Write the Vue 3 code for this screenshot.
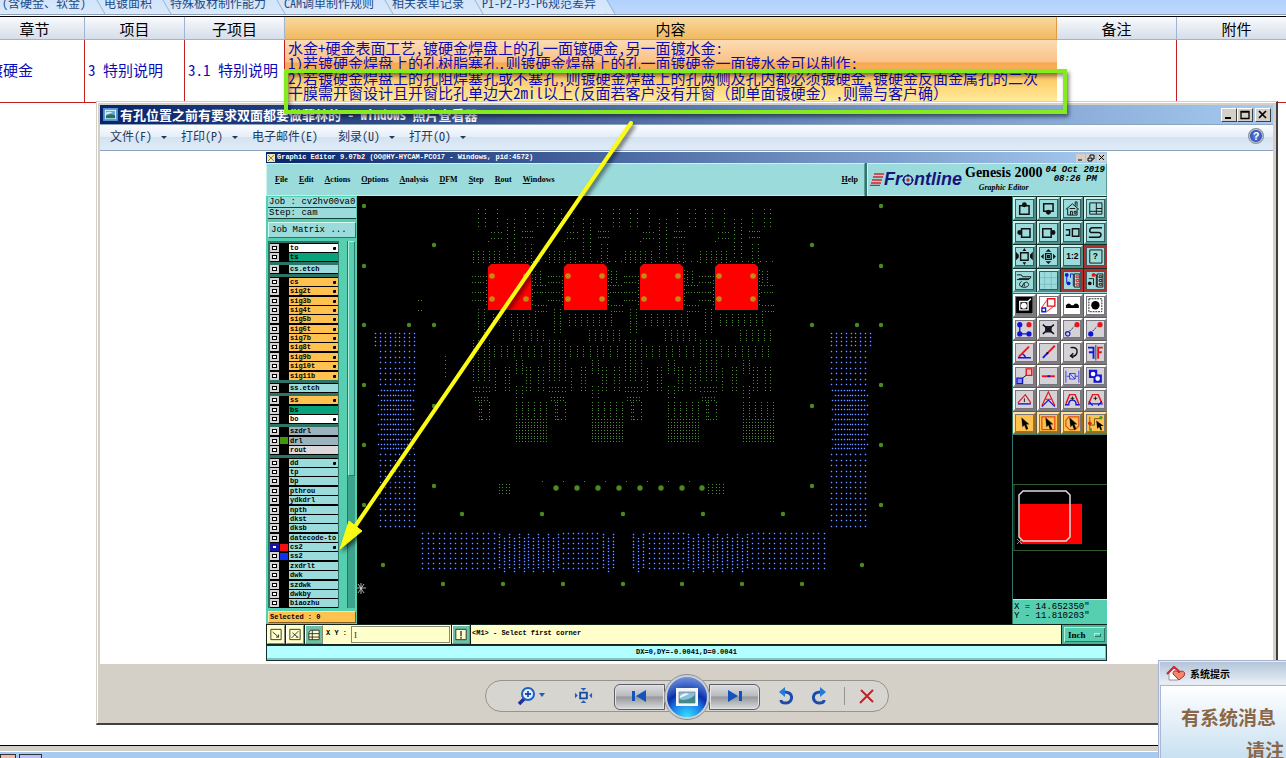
<script setup>
import { ref } from 'vue'

const sheetTabs = ['(含硬金、软金)', '电镀面积', '特殊板材制作能力', 'CAM调单制作规则', '相关表单记录', 'P1-P2-P3-P6规范差异']

const viewerMenu = [
    { text: '文件(F)', caret: true },
    { text: '打印(P)', caret: true },
    { text: '电子邮件(E)', caret: false },
    { text: '刻录(U)', caret: true },
    { text: '打开(O)', caret: true }
]

const editorMenu = ['File', 'Edit', 'Actions', 'Options', 'Analysis', 'DFM', 'Step', 'Rout', 'Windows']

const row = (name, tone = 'aqua', mark = false, swatch = '') => ({ name, tone, mark, swatch })

const layerGroups = [
    [row('to', 'white', true), row('ts', 'green')],
    [row('cs.etch')],
    ['cs', 'sig2t', 'sig3b', 'sig4t', 'sig5b', 'sig6t', 'sig7b', 'sig8t', 'sig9b', 'sig10t', 'sig11b'].map(n => row(n, 'orange', true)),
    [row('ss.etch')],
    [row('ss', 'orange', true), row('bs', 'green'), row('bo', 'white', true)],
    [row('szdrl', 'steel'), row('drl', 'steel', false, 'lime'), row('rout', 'pale')],
    [
        row('dd', 'aqua', true), row('tp'), row('bp'), row('pthrou'), row('ydkdrl'), row('npth'), row('dkst'), row('dksb'),
        row('datecode-to'), row('cs2', 'aqua', true, 'red'), row('ss2', 'aqua', false, 'blue'), row('zxdrlt'),
        row('dwk'), row('szdwk'), row('dwkby'), row('biaozhu')
    ]
]

const command = ref('')

// each shape: [path, stroke, fill, stroke width]
const K = '#111'
const R = '#e8141c'
const B = '#1414d8'
const N = 'none'
const dot = (x, y, r) => `M${x - r} ${y}a${r} ${r} 0 1 0 ${r * 2} 0a${r} ${r} 0 1 0 ${-r * 2} 0`
const cursor = 'M9 6l1 10 2-2 2 5 2-1-2-5h3z'

const viewTools = [
    { title: 'Pan up', s: [['M7 9h10v9H7z', K, N, 1.6], [dot(12, 8, 2.6), N, K]] },
    { title: 'Pan down', s: [['M7 7h10v8H7z', K, N, 1.6], [dot(12, 16, 2.6), N, K]] },
    { title: 'Home', s: [['M5 13l7-6 7 6M7 12v7h10v-7M10 19v-4h2v4M14 15h2v2h-2zM9 12h6M15 9V5h2v5', K, N, 1]] },
    { title: 'Split', s: [['M6 6h13v12H6zM13 6v12M6 15h13M13 12h6', K, N, 1]] },
    { title: 'Pan left', s: [['M9 8h9v9H9z', K, N, 1.6], [dot(7, 12, 2.6), N, K]] },
    { title: 'Pan right', s: [['M6 8h9v9H6z', K, N, 1.6], [dot(17, 12, 2.6), N, K]] },
    { title: 'Previous', s: [['M5 9h4v6H5M12 8h7v8h-7z', K, N, 1.5]] },
    { title: 'Serpentine', s: [['M19 7H9q-3 0-3 3 0 2 3 2h6q3 0 3 2 0 3-3 3H5', K, N, 1.5]] },
    { title: 'Zoom out', s: [['M8 8h8v8H8z', K, N, 1.5], ['M10 6l2-3 2 3zM10 18l2 3 2-3zM6 10l-3-3v9l3-3zM18 10l3-3v9l-3-3z', N, K]] },
    { title: 'Zoom in', s: [['M9 9h6v6H9zM11 11h2v2h-2z', K, N, 1.3], ['M9 7l3-3 3 3zM9 17l3 3 3-3zM7 9l-3 3 3 3zM17 9l3 3-3 3z', N, K]] },
    { title: 'Zoom one to two', t: '1:2', s: [] },
    { title: 'Info', t: '?', hot: true, s: [['M6 5h13v14H6z', K, N, 1]] },
    { title: 'Measure', s: [['M4 6h5l1 2h9l-1 2H6M4 11h13M9 13c-3 2-3 5 1 6 5 1 8-2 6-4-2-3-5 0-4 3M12 14l-3 5', K, N, 1]] },
    { title: 'Grid', s: [['M3 9h18M3 16h18M8 3v18M15 3v18', '#7fbcc4', N, 1]] },
    { title: 'Layers', hot: true, s: [['M6 6v9h4M10 9V5h3v13', B, N, 1], [dot(6, 6, 2) + dot(8, 15, 2), N, B], ['M14 5h6v14h-6z', K, '#bfd8d8', 1], ['M16 7h3v2h-3zM16 11h3v2h-3zM16 15h3v2h-3z', R, N, 1]] },
    { title: 'Nets', hot: true, s: [['M5 10h5v7M10 6h3v13', K, N, 1], [dot(6, 15, 2), N, K], [dot(10, 6, 2), N, R], ['M14 5h6v14h-6z', K, '#bfd8d8', 1], ['M16 7h3v2h-3zM16 11h3v2h-3zM16 15h3v2h-3z', K, N, 1]] }
]

const editTools = [
    { title: 'Negative pad', tone: 'white', s: [['M3 3h18v18H3z', N, '#000'], ['M7 8h9v9H7zM16 8l3-3', '#fff', N, 1.5], [dot(11.500, 12.500, 3.200), N, '#fff']] },
    { title: 'Resize', tone: 'white', s: [['M11 5h8v8h-8z', R, N, 1.5], ['M5 15h4v4H5z', B, N, 1.5], ['M5 14l6-8M10 19l8-6', R, N, 1]] },
    { title: 'Bumps', tone: 'white', s: [['M5 15v-3q3-4 6 0h2q3-4 6 0v3z', N, '#000']] },
    { title: 'Pad', tone: 'white', s: [['M5 5h14v14H5z', K, N, 1, '2 1'], [dot(12, 12, 4.500), N, '#000']] },
    { title: 'Copy', s: [['M7 7v10h10', B, N, 1.4], [dot(7, 7, 2.800) + dot(7, 17, 2.800) + dot(17, 17, 2.800), N, B], [dot(17, 7, 2.800), N, R]] },
    { title: 'Delete', s: [['M9 9h6v6H9z', K, '#26268a', 1], ['M6 7l12 10M18 7L6 17', K, N, 1.5]] },
    { title: 'Move', s: [[dot(7, 17, 2.400), B, N, 1.3], ['M9 14l5-5', K, N, 1, '2 1'], [dot(17, 7, 2.800), N, R]] },
    { title: 'Drag', s: [[dot(7, 17, 2.800), N, B], ['M9 14l5-5', K, N, 1, '2 1'], [dot(17, 7, 2.800), N, R]] },
    { title: 'Angle', s: [['M17 6L6 17', R, N, 2], ['M5 18h14M13 18q0-3-3-4', B, N, 1.5]] },
    { title: 'Line', s: [['M19 5l-8 8', R, N, 2], ['M11 13l-5 5', B, N, 2], [dot(11, 13, 1.200), N, K]] },
    { title: 'Rotate', s: [['M10 7q8-1 7 5-1 5-6 4M13 13l-3 3 3 2', K, N, 1.5]] },
    { title: 'Mirror', s: [['M4 7h6v12M5 12h5', B, N, 2], ['M20 7h-5v12M15 12h4', R, N, 2], ['M12.500 4v17', K, N, 0.800]] },
    { title: 'Change symbol', s: [['M14 4h6v7h-6z', R, '#f7b8b8', 1.5], ['M4 14h6v6H4z', B, '#8d94f0', 1.5], ['M10 14l4-3', K, N, 1]] },
    { title: 'Break', s: [['M5 12h14', R, N, 2], ['M11 12h3', B, N, 2]] },
    { title: 'Stretch', s: [['M5 6v13M19 6v13M9 9h6v6H9zM6 12h3M15 12h3M9 9l6 6', B, N, 0.800]] },
    { title: 'Merge', s: [['M5 5h9v9H5zM10 10h9v9h-9z', N, B], [dot(9.500, 9.500, 2.500) + dot(14.500, 14.500, 2.500), N, '#fff']] },
    { title: 'Triangle', s: [['M5 16L13 7l6 9', R, N, 1.300], ['M5 17h14', B, N, 1.500], ['M12 11v4', K, N, 1]] },
    { title: 'Peak', s: [['M5 19L12 4l7 15M9 12h6', R, N, 1.300], ['M5 20l7-7 7 7', B, N, 1.300]] },
    { title: 'Slope', s: [['M5 17L9 7h6l4 10', R, N, 1.600], ['M4 18h4q0-5 4-5t4 5h4', B, N, 1.500], ['M12 9v4M10 11h4', K, N, 1]] },
    { title: 'Cross slope', s: [['M5 16L9 7h6l4 9', R, N, 1.600], ['M4 17h16M5 14l4 5M19 14l-4 5', B, N, 1.300], ['M12 9v4M10 11h4', K, N, 1]] },
    { title: 'Select', tone: 'gold', s: [[cursor, K, '#000', 0.300]] },
    { title: 'Select in frame', tone: 'gold', s: [['M5 5h14v14H5z', '#e0491c', N, 1.300], [cursor, K, '#000', 0.300]] },
    { title: 'Select in polygon', tone: 'gold', s: [['M8 5h11v10l-4 4H9l-4-4V9z', '#e0491c', N, 1.300], [cursor, K, '#000', 0.300]] },
    { title: 'Select net', tone: 'gold', s: [['M6 5v14M6 14h5V7h8', '#6b571d', N, 1], [dot(6, 12, 2), N, '#d42a10'], [dot(18, 6, 1.800) + dot(7, 19, 1.500), N, '#3c9c1c'], ['M13 9l1 9 2-2 2 4 1-1-1-4h3z', N, '#000']] }
]

// a block of evenly spaced one pixel pads as one path
function pads(x0, x1, cols, y0, y1, rows) {
    let d = ''
    for (let i = 0; i < cols; i++) {
        for (let j = 0; j < rows; j++) {
            const x = x0 + (cols > 1 ? (x1 - x0) * i / (cols - 1) : 0)
            const y = y0 + (rows > 1 ? (y1 - y0) * j / (rows - 1) : 0)
            d += `M${Math.round(x)} ${Math.round(y)}h1v1h-1z`
        }
    }
    return d
}

function edgeConnector(x, dense, wideRight) {
    const w = 34
    let d = wideRight ? pads(x, x + 39, 9, 333, 345, 4) : pads(x - 5, x + w, 9, 333, 345, 4)
    d += pads(x, x + w, 8, 351, 384, 7)
    for (let i = 0; i < 13; i++) {
        const shift = i % 2 ? dense : 0
        const y = 390 + i * 4.87
        d += pads(x + 1 + shift, x + w - 1 + shift, 12, y, y, 1)
    }
    return d + pads(x, x + w, 8, 454, 526, 14)
}

function denseColumns(x, cols) {
    let d = ''
    for (let i = 0; i < cols; i++) {
        const y = i % 2 ? 538 : 534
        d += pads(x + i * 4.9, 0, 1, y, y + 33, 11)
    }
    return d
}

const bluePads = edgeConnector(380, -3, false) + edgeConnector(831, 3, true)
    + pads(422, 494, 14, 533, 568, 8) + denseColumns(499, 13) + pads(563, 597, 8, 533, 568, 8) + denseColumns(603, 3)
    + denseColumns(633, 3) + pads(649, 683, 8, 533, 568, 8) + denseColumns(688, 13) + pads(752, 824, 14, 533, 568, 8)

const drills = [
    [364, 206], [434, 245], [364, 266], [364, 325], [409, 325], [434, 325], [364, 385], [434, 406], [364, 445], [434, 486], [364, 505],
    [881, 206], [812, 245], [881, 266], [812, 325], [857, 325], [881, 325], [881, 385], [812, 406], [881, 445], [812, 486], [881, 505],
    [462, 514], [542, 514], [623, 514], [703, 514], [783, 514], [383, 565], [862, 565],
    [443, 584], [503, 584], [563, 584], [623, 584], [682, 584], [742, 584], [802, 584]
]

const bigDrills = [556, 577, 598, 619, 640, 661, 682, 702]
const chips = [488, 564, 640, 715]

// one board's via field: x from, x to, columns, y from, y to, rows
const viaField = [
    [478, 485, 2, 209, 226, 5], [497, 497, 1, 209, 226, 5], [525, 525, 1, 209, 226, 5], [537, 543, 2, 209, 226, 5],
    [507, 514, 2, 219, 257, 11], [491, 501, 4, 232, 238, 2], [522, 532, 5, 231, 237, 2], [488, 488, 1, 241, 241, 1],
    [473, 499, 6, 251, 262, 5], [525, 531, 2, 244, 262, 6], [503, 545, 8, 261, 261, 1],
    [472, 483, 5, 276, 282, 2], [472, 483, 5, 292, 300, 2], [486, 486, 1, 276, 304, 9], [532, 532, 1, 270, 304, 10],
    [535, 540, 2, 271, 282, 5], [534, 545, 5, 285, 292, 2], [535, 546, 5, 305, 311, 2],
    [478, 484, 2, 309, 332, 9], [493, 535, 8, 314, 325, 5], [513, 543, 6, 330, 340, 5],
    [473, 489, 4, 340, 380, 15], [494, 541, 8, 346, 356, 5], [516, 522, 2, 360, 373, 6],
    [495, 495, 1, 368, 390, 8], [505, 509, 2, 367, 390, 8], [526, 530, 2, 367, 390, 8], [538, 543, 2, 367, 390, 8],
    [473, 489, 6, 387, 391, 2], [475, 487, 5, 397, 400, 2], [516, 522, 2, 386, 397, 4],
    [479, 481, 2, 402, 419, 6], [489, 489, 1, 402, 419, 6], [479, 489, 4, 419, 419, 1],
    [516, 546, 6, 402, 416, 6], [516, 546, 11, 419, 441, 9]
]

let vias = ''
for (let i = 0; i < 4; i++) {
    for (const [x0, x1, c, y0, y1, r] of viaField) vias += pads(x0 + i * 75.800, x1 + i * 75.800, c, y0, y1, r)
}
vias += pads(542, 689, 8, 481, 481, 1) + pads(499, 509, 4, 484, 493, 4) + pads(708, 723, 5, 484, 493, 4)
    + pads(418, 421, 2, 300, 310, 2) + pads(445, 445, 1, 356, 376, 6)
</script>

<template>
    <div class="page">
        <nav class="sheet-tabs">
            <a v-for="tab in sheetTabs" :key="tab" href="#" class="sheet-tab">{{ tab }}</a>
        </nav>

        <table class="sheet">
            <thead>
                <tr>
                    <th class="col-std">章节</th>
                    <th class="col-std">项目</th>
                    <th class="col-std">子项目</th>
                    <th class="picked">内容</th>
                    <th class="col-note">备注</th>
                    <th class="col-note">附件</th>
                </tr>
            </thead>
            <tbody>
                <tr>
                    <td>镀硬金</td>
                    <td>3 特别说明</td>
                    <td>3.1 特别说明</td>
                    <td class="picked">
                        <div>水金+硬金表面工艺,镀硬金焊盘上的孔一面镀硬金,另一面镀水金:</div>
                        <div>1)若镀硬金焊盘上的孔树脂塞孔,则镀硬金焊盘上的孔一面镀硬金一面镀水金可以制作;</div>
                        <div>2)若镀硬金焊盘上的孔阻焊塞孔或不塞孔,则镀硬金焊盘上的孔两侧及孔内都必须镀硬金,镀硬金反面金属孔的二次</div>
                        <div>干膜需开窗设计且开窗比孔单边大2mil以上(反面若客户没有开窗<span class="wide">（即单面镀硬金）</span>,则需与客户确<span class="wide">）</span></div>
                    </td>
                    <td></td>
                    <td></td>
                </tr>
            </tbody>
        </table>

        <footer class="sheet-foot">
            <span class="chip pink"></span>
            <span class="chip lilac"></span>
        </footer>

        <section class="viewer">
            <header class="titlebar">
                <svg class="title-icon" viewBox="0 0 16 14">
                    <path d="M0 0h16v14H0z" fill="#4f94cf" />
                    <path d="M2 2h12v10H2z" fill="#eef6fb" />
                    <path d="M3 3h10v8H3z" fill="#64a8d6" />
                    <path d="M3 9q4-4 10-1v3H3z" fill="#2c6d58" />
                    <path d="M3 5q4-2 7 0l-7 2z" fill="#d9eefa" />
                </svg>
                <span class="title-text">有孔位置之前有要求双面都要做菲林的 - Windows 照片查看器</span>
                <button class="win-btn" aria-label="Minimize"><svg viewBox="0 0 12 10"><path d="M2 8h6" stroke="#000" stroke-width="2" /></svg></button>
                <button class="win-btn" aria-label="Maximize"><svg viewBox="0 0 12 10"><path d="M2 1.500h8v7H2zM2 2h8" fill="none" stroke="#000" stroke-width="1.300" /></svg></button>
                <button class="win-btn close" aria-label="Close"><svg viewBox="0 0 12 10"><path d="M2 1l7 7M9 1L2 8" stroke="#000" stroke-width="1.700" /></svg></button>
            </header>

            <div class="viewer-menu">
                <button v-for="m in viewerMenu" :key="m.text" :class="{ plain: !m.caret }">
                    {{ m.text }}<i v-if="m.caret" class="caret"></i>
                </button>
                <button class="help" aria-label="Help">?</button>
            </div>

            <div class="photo-area">
                <div class="editor">
                    <div class="ed-title">
                        <svg class="ed-logo" viewBox="0 0 8 8"><path d="M0 0h8v8H0z" fill="#eee9b8" /><path d="M1 1l6 6M7 1L1 7" stroke="#99852a" /></svg>
                        <span>Graphic Editor 9.07b2 (OO@HY-HYCAM-PCO17 - Windows, pid:4572)</span>
                        <svg class="ed-ctl" viewBox="0 0 30 8">
                            <path d="M0 0h9v8H0zM10 0h9v8h-9zM21 0h9v8h-9z" fill="#d4d0c8" />
                            <path d="M2 6h4M12 4h4v3h-4zM14 3V1h4v4h-2M23 1l5 5M28 1l-5 5" fill="none" stroke="#000" />
                        </svg>
                    </div>

                    <div class="ed-head">
                        <nav class="ed-menu">
                            <button v-for="m in editorMenu" :key="m">{{ m }}</button>
                            <button class="ed-help">Help</button>
                        </nav>
                        <div class="brand">
                            <div class="logo">
                                <svg class="stripes" viewBox="0 0 14 14"><path d="M4 2h10M3 5h10M2 8h10M1 11h10M0 13.500h10" stroke="#d8252c" stroke-width="1.500" /></svg>
                                <span>Fr</span>
                                <svg class="target" viewBox="0 0 12 12"><circle cx="6" cy="6" r="4.500" fill="none" stroke="#15157c" stroke-width="1.500" /><circle cx="6" cy="6" r="1.700" fill="#d8252c" /><path d="M6 0v3M6 9v3M0 6h3M9 6h3" stroke="#15157c" /></svg>
                                <span>ntline</span>
                            </div>
                            <div class="product">
                                <div class="product-name">Genesis 2000</div>
                                <div class="product-sub">Graphic Editor</div>
                            </div>
                            <div class="clock">
                                <div>04 Oct 2019</div>
                                <div>08:26 PM</div>
                            </div>
                        </div>
                    </div>

                    <div class="ed-body">
                        <aside class="left">
                            <div class="job">Job : cv2hv00va0</div>
                            <div class="job">Step: cam</div>
                            <button class="matrix">Job Matrix ...</button>
                            <div class="layer-box">
                                <div class="layers">
                                    <div v-for="(group, g) in layerGroups" :key="g" class="group" :style="{ flexGrow: group.length }">
                                        <label v-for="l in group" :key="l.name" class="layer">
                                            <input type="checkbox" :class="{ active: l.name === 'cs2' }">
                                            <span class="swatch" :class="l.swatch"></span>
                                            <span class="name" :class="l.tone">{{ l.name }}<i v-if="l.mark"></i></span>
                                        </label>
                                    </div>
                                </div>
                                <div class="scroll">
                                    <div class="thumb"></div>
                                </div>
                            </div>
                            <div class="selected">Selected : 0</div>
                        </aside>

                        <div class="canvas">
                            <svg viewBox="357 196 655 428">
                                <path :d="vias" fill="#4d8a35" />
                                <path :d="bluePads" fill="#6f9dff" stroke="#1c34b4" stroke-width="1" paint-order="stroke" />
                                <g v-for="x in chips" :key="x">
                                    <path :d="`M${x} 310v-43l3-3h37l3 3v43z`" fill="#fe0000" />
                                    <circle v-for="(p, i) in [[4, 276], [38, 276], [4, 299], [38, 299]]" :key="i" :cx="x + p[0]" :cy="p[1]" r="2.800" fill="#c48a10" />
                                </g>
                                <circle v-for="(p, i) in drills" :key="i" :cx="p[0]" :cy="p[1]" r="2.200" fill="#4c8a1e" />
                                <circle v-for="x in bigDrills" :key="x" :cx="x" cy="488" r="2.700" fill="#4c8a1e" />
                                <path d="M357 588h9M361 583v11M358 584l6 9M364 584l-6 9" stroke="#ddd" stroke-width="0.800" />
                            </svg>
                        </div>

                        <aside class="right">
                            <div class="tools view">
                                <button v-for="t in viewTools" :key="t.title" :aria-label="t.title" :class="{ hot: t.hot }">
                                    <svg viewBox="2 2 20 20">
                                        <path v-for="(s, i) in t.s" :key="i" :d="s[0]" :stroke="s[1]" :fill="s[2]" :stroke-width="s[3]" />
                                        <text v-if="t.t" x="12" y="15" text-anchor="middle">{{ t.t }}</text>
                                    </svg>
                                </button>
                            </div>
                            <div class="tools edit">
                                <button v-for="t in editTools" :key="t.title" :aria-label="t.title" :class="t.tone">
                                    <svg viewBox="2 2 20 20">
                                        <path v-for="(s, i) in t.s" :key="i" :d="s[0]" :stroke="s[1]" :fill="s[2]" :stroke-width="s[3]" :stroke-dasharray="s[4]" />
                                    </svg>
                                </button>
                            </div>
                            <div class="overview">
                                <svg viewBox="0 0 94 162">
                                    <path d="M0 48.500h94M0 114.500h94M1 49v65" stroke="#2f5a2a" />
                                    <path d="M7 68h62v40H7z" fill="#fe0000" />
                                    <path d="M10 55h43l4 4v42l-4 4H10l-4-4V59z" fill="none" stroke="#dcdcdc" stroke-width="1.500" />
                                    <path d="M4 103l5 5M9 103l-5 5" stroke="#ccc" stroke-width="0.700" />
                                </svg>
                            </div>
                            <div class="coords">
                                <div>X = 14.652350"</div>
                                <div>Y - 11.810203"</div>
                            </div>
                        </aside>
                    </div>

                    <div class="command">
                        <button class="cmd-btn" aria-label="Snap line"><svg viewBox="0 0 14 14"><path d="M1 1h12v12H1z" fill="none" stroke="#222" /><path d="M3 4l7 6M10 7v3H7" fill="none" stroke="#222" /></svg></button>
                        <button class="cmd-btn" aria-label="Snap off"><svg viewBox="0 0 14 14"><path d="M1 1h12v12H1z" fill="none" stroke="#222" /><path d="M3 11l8-8M4 5l6 5M8 10h3" fill="none" stroke="#222" /></svg></button>
                        <button class="cmd-btn teal" aria-label="Grid"><svg viewBox="0 0 14 14"><path d="M3 2h10v11H1V5z" fill="#ffffcc" stroke="#222" /><path d="M1 6h12M1 10h12M5 2v11" fill="none" stroke="#222" /></svg></button>
                        <label class="xy" for="xy">X Y :</label>
                        <input id="xy" v-model="command" class="xy-input" type="text" placeholder="I">
                        <button class="cmd-btn teal" aria-label="Run"><svg viewBox="0 0 14 14"><path d="M1 1h12v12H1z" fill="#ffffcc" stroke="#222" /><path d="M7 3v6M7 10v2" stroke="#222" stroke-width="1.500" /></svg></button>
                        <div class="hint">&lt;M1&gt; - Select first corner</div>
                        <div class="unit">
                            <select aria-label="Unit">
                                <option>Inch</option>
                            </select>
                            <i></i>
                        </div>
                    </div>
                    <div class="status">DX=0,DY=-0.0041,D=0.0041</div>
                </div>
            </div>

            <div class="viewer-tools">
                <div class="pill">
                    <div class="side start">
                        <button class="zoom-btn" aria-label="Zoom">
                            <svg viewBox="0 0 28 20">
                                <path d="M2 18l6-6" stroke="#27308f" stroke-width="3.500" />
                                <circle cx="11" cy="8" r="6" fill="#e2eef9" stroke="#1d62c2" stroke-width="2" />
                                <path d="M8 8h6M11 5v6" stroke="#1d4fb0" stroke-width="1.800" />
                                <path d="M22 7h6l-3 4z" fill="#1d5cba" />
                            </svg>
                        </button>
                        <button class="fit-btn" aria-label="Fit">
                            <svg viewBox="0 0 20 20">
                                <path d="M6.500 7h7v6h-7z" fill="none" stroke="#174aa6" stroke-width="2" />
                                <path d="M7 2h6l-3 3zM7 18h6l-3-3zM1 7v6l3-3zM19 7v6l-3-3z" fill="#1c61c4" />
                            </svg>
                        </button>
                    </div>
                    <div class="center">
                        <button class="step prev" aria-label="Previous"><svg viewBox="0 0 16 12"><path d="M1 1h3v10H1zM15 0v12L5 6z" fill="#1453bd" /></svg></button>
                        <button class="play" aria-label="Slide show">
                            <svg viewBox="0 0 22 18">
                                <path d="M0 0h22v18H0z" fill="#f4f5f7" />
                                <path d="M3 4h16v11H3z" fill="#87bede" stroke="#777" stroke-width="0.700" />
                                <path d="M3 11q8 3 16-4v8H3z" fill="#438a87" />
                                <path d="M4 8q5-4 9-2l-9 4z" fill="#eef8fa" />
                            </svg>
                        </button>
                        <button class="step next" aria-label="Next"><svg viewBox="0 0 16 12"><path d="M12 1h3v10h-3zM1 0v12l10-6z" fill="#1453bd" /></svg></button>
                    </div>
                    <div class="side end">
                        <button aria-label="Rotate left"><svg viewBox="0 0 16 18"><path d="M5 5c12-1 10 11 3 11-3 0-5-1-5-3" fill="none" stroke="#1b4cab" stroke-width="3" /><path d="M7 0v10L1 5z" fill="#1f7bdc" /></svg></button>
                        <button aria-label="Rotate right"><svg viewBox="0 0 16 18"><path d="M11 5C-1 4 1 16 8 16c3 0 5-1 5-3" fill="none" stroke="#1b4cab" stroke-width="3" /><path d="M9 0v10l6-5z" fill="#1f7bdc" /></svg></button>
                        <span class="divider"></span>
                        <button aria-label="Delete"><svg viewBox="0 0 16 18"><path d="M2 3l12 12M14 3L1 16" fill="none" stroke="#c3202a" stroke-width="2" /></svg></button>
                    </div>
                </div>
            </div>
        </section>

        <div class="highlight"></div>
        <svg class="arrow" viewBox="336 116 310 440">
            <path d="M631 123L354 528" stroke="#fbfb14" stroke-width="4" stroke-linecap="round" />
            <path d="M340 549l9-28 13 10z" fill="#fbfb14" stroke="#fbfb14" stroke-width="1" />
        </svg>

        <section class="notice">
            <header>
                <svg viewBox="0 0 20 16">
                    <path d="M3 8v7h9V5L8 3z" fill="#fff" stroke="#9c8f94" />
                    <path d="M1 9l7-7 7 6" fill="none" stroke="#cf2732" stroke-width="2.200" />
                    <path d="M13 15L7 9q0-4 3-3 2 0 3 2 1-2 3-2 4 1 2 5z" fill="#f0896c" stroke="#b02c34" />
                </svg>
                <span>系统提示</span>
            </header>
            <div class="notice-body">
                <p>有系统消息</p>
                <p class="more">请注</p>
            </div>
        </section>
    </div>
</template>

<style>
body {
    background: #fff;
    overflow: hidden;
}
</style>

<style scoped>
.page {
    position: relative;
    display: flex;
    flex-direction: column;
    min-height: 100vh;
    overflow: hidden;
    font-family: "Noto Sans CJK SC", sans-serif;
    font-feature-settings: "hwid";
    color: #000;
}

.page * {
    box-sizing: border-box;
}

button {
    padding: 0;
    border: 0;
    background: none;
    font: inherit;
    font-feature-settings: inherit;
    color: inherit;
}

svg {
    display: block;
}

/* Sheet tabs, cut by the top edge of the screen */
.sheet-tabs {
    display: flex;
    height: 27px;
    margin-top: -12px;
    border-bottom: 1px solid #8d9db3;
    background: linear-gradient(#a6c9fb, #bed9ff);
}

.sheet-tab {
    position: relative;
    padding: 0 9px;
    line-height: 30px;
    font-size: 12px;
    white-space: nowrap;
    color: #1e4a86;
    text-decoration: none;
    background: linear-gradient(#c9dff9, #dbeafb);
}

.sheet-tab:first-child {
    padding-left: 2px;
}

.sheet-tab::after {
    content: '';
    position: absolute;
    top: 0;
    right: -3px;
    z-index: 1;
    width: 8px;
    height: 26px;
    border-right: 1px solid #93b3dc;
    background: inherit;
    transform: skewX(30deg);
}

/* Sheet grid */
.sheet {
    width: calc(100% + 26px);
    margin: 1px 0 0 -15px;
    border-top: 1px solid #000;
    border-spacing: 0;
    table-layout: fixed;
    font-size: 15px;
}

.col-std {
    width: 100px;
}

.col-note {
    width: 120px;
}

th {
    height: 23px;
    padding: 2px 0 1px;
    line-height: 19px;
    font-weight: 400;
    border-right: 1px solid #9db4d2;
    border-bottom: 1px solid #9db4d2;
    background: linear-gradient(#f8fafc, #d6deea);
}

th.picked {
    border-color: #e09a3c;
    background: linear-gradient(#fad9a0, #f1b95f);
}

td {
    height: 63px;
    padding: 0 3px 3px;
    line-height: 15px;
    white-space: nowrap;
    overflow: hidden;
    color: #0c0cb4;
    border-right: 1px solid #c42020;
    border-bottom: 1px solid #c42020;
}

td.picked {
    padding-bottom: 2px;
    border-right: 0;
    background: linear-gradient(#fcdcb4, #fac185 22px, #f7a64f 23px, #fdd06e 42px, #ffec9c);
}

.wide {
    font-feature-settings: normal;
}

.sheet-foot {
    display: flex;
    gap: 3px;
    height: 13px;
    margin-top: auto;
    padding-top: 8px;
    border-top: 1px solid #000;
    background: linear-gradient(#d4d0c8 5px, #fff 5px, #fff 6px, #a6caf0 6px);
}

.chip {
    width: 23px;
    border: 1px solid #333;
    border-bottom: 0;
    background: #bdbdf8;
}

.chip.pink {
    width: 16px;
    background: #f6b4b4;
}

/* Photo viewer window */
.viewer {
    position: absolute;
    top: 101px;
    left: 96px;
    right: 8px;
    padding: 2px 3px 1px 2px;
    border: 1px solid #d4d0c8;
    border-right: 2px solid #404040;
    border-bottom: 2px solid #404040;
    background: #d4d0c8;
    box-shadow: inset 1px 1px 0 #fff;
}

.titlebar {
    display: flex;
    align-items: center;
    height: 19px;
    margin: 1px 0 0 1px;
    padding: 0 2px 0 3px;
    background: linear-gradient(90deg, #0a246a, #a6caf0);
    color: #fff;
}

.title-icon {
    width: 15px;
    height: 13px;
    margin-right: 2px;
}

.title-text {
    flex: 1;
    font-size: 13px;
    font-weight: 700;
    line-height: 18px;
    white-space: nowrap;
}

.win-btn {
    width: 16px;
    height: 14px;
    padding: 1px;
    border: 1px solid;
    border-color: #fff #404040 #404040 #fff;
    background: #d4d0c8;
}

.win-btn.close {
    margin-left: 2px;
}

.viewer-menu {
    display: flex;
    align-items: center;
    gap: 14px;
    height: 27px;
    margin-left: 1px;
    padding: 0 9px 3px 10px;
    border-top: 1px solid #8ea3bd;
    border-bottom: 1px solid #8ea3bd;
    background: linear-gradient(#fbfdff, #e4eef8 48%, #d5e3f1 50%, #dfebf7);
    font-size: 12px;
    line-height: 14px;
    color: #1e395b;
}

.viewer-menu button {
    display: flex;
    align-items: center;
    white-space: nowrap;
}

.viewer-menu .plain {
    padding-right: 6px;
}

.caret {
    margin: 2px 0 0 9px;
    border: 3px solid transparent;
    border-top-color: #1e395b;
    border-bottom: 0;
}

.viewer-menu .help {
    justify-content: center;
    width: 16px;
    height: 16px;
    margin-left: auto;
    border: 2px solid #b9bfcb;
    border-radius: 50%;
    outline: 1px solid #8d93a0;
    outline-offset: -1px;
    background: radial-gradient(#5a8ae6, #1c3aa4);
    font: bold 11px "Liberation Sans", sans-serif;
    color: #fff;
}

.photo-area {
    margin-left: 1px;
    padding: 1px 166px 3px;
    background: #fff;
}

/* Graphic editor screen */
.editor {
    font: bold 7px/9px "Liberation Mono", monospace;
    background: #14342f;
}

.ed-title {
    display: flex;
    align-items: center;
    gap: 2px;
    height: 11px;
    padding: 0 1px;
    background: linear-gradient(90deg, #0a246a, #a6caf0);
    color: #fff;
    white-space: nowrap;
}

.ed-logo {
    width: 8px;
    height: 8px;
}

.ed-ctl {
    width: 30px;
    height: 8px;
    margin-left: auto;
}

.ed-head {
    display: flex;
    gap: 2px;
    height: 33px;
    background: #38746e;
}

.ed-menu,
.brand {
    display: flex;
    border: 1px solid;
    border-color: #cdf3ef #5a9c98 #c6efea #cdf3ef;
    background: #9bdbdb;
}

.ed-menu {
    flex: 1;
    align-items: center;
    gap: 11px;
    padding: 0 6px 0 8px;
    font: bold 8px/10px "Liberation Serif", serif;
}

.ed-menu button::first-letter {
    text-decoration: underline;
}

.ed-menu .ed-help {
    margin-left: auto;
}

.brand {
    width: 240px;
    white-space: nowrap;
}

.logo {
    display: flex;
    align-items: center;
    height: 29px;
    padding-left: 2px;
    font: italic bold 18px/20px "Liberation Sans", sans-serif;
    color: #15157c;
}

.stripes {
    width: 14px;
    height: 14px;
}

.target {
    width: 12px;
    height: 12px;
    margin-top: 3px;
}

.product {
    margin-left: 3px;
    text-align: center;
    font: bold 14px/18px "Liberation Serif", serif;
}

.product-sub {
    font-size: 8px;
    font-style: italic;
    line-height: 12px;
}

.clock {
    margin-left: auto;
    padding: 2px 1px 0 0;
    text-align: center;
    font-size: 9px;
    font-style: italic;
}

.ed-body {
    display: flex;
    height: 428px;
}

/* Left column: job and layer list */
.left {
    display: flex;
    flex-direction: column;
    width: 91px;
    padding: 1px 1px 1px 2px;
    background: #56cfb0;
    white-space: nowrap;
}

.job,
.matrix {
    height: 11px;
    padding-left: 1px;
    border-bottom: 1px solid #16423c;
    background: #9bdbdb;
    font-size: 9px;
    font-weight: 400;
    line-height: 11px;
    text-align: left;
}

.matrix {
    height: 16px;
    margin: 3px 0;
    padding-left: 2px;
    border: 1px solid;
    border-color: #d6f6f2 #2f736a #2f736a #d6f6f2;
}

.layer-box {
    display: flex;
    flex: 1;
    min-height: 0;
    gap: 8px;
}

.layers {
    display: flex;
    flex-direction: column;
    gap: 3px;
    width: 71px;
    padding: 2px 1px 0 2px;
    background: #2d7467;
}

.group {
    display: flex;
    flex: 1 1 0;
    flex-direction: column;
    min-height: 0;
    background: #000;
}

.layer {
    display: flex;
    flex: 1 1 0;
    min-height: 0;
    align-items: center;
}

.layer input {
    appearance: none;
    width: 9px;
    height: 8px;
    margin: 0;
    border: 1px solid #d4d0d0;
    background: #fff;
    box-shadow: inset 0 0 0 1px #d4d0d0, inset 0 0 0 2px #000;
}

.layer input.active {
    border-color: #1414a0;
    box-shadow: inset 0 0 0 2px #1414a0;
}

.swatch {
    width: 8px;
    height: 7px;
    margin: 0 1px;
}

.swatch.lime { background: #3f9a08; }
.swatch.red { background: #f01010; }
.swatch.blue { background: #1030f0; }

.name {
    position: relative;
    flex: 1;
    height: 8px;
    padding-left: 1px;
    line-height: 8px;
}

.name i {
    position: absolute;
    right: 2px;
    top: 3px;
    width: 3px;
    height: 3px;
    border-radius: 1px 0 1px 1px;
    background: #000;
}

.name.aqua { background: #9bdbdb; }
.name.white { background: #fff; }
.name.green { background: #08a27a; }
.name.orange { background: #ffc24f; }
.name.steel { background: #9cb2bc; }
.name.pale { background: #dcd8da; }

.scroll {
    width: 8px;
    background: #3da38b;
    border-left: 1px solid #2d7467;
}

.thumb {
    height: 64%;
    border: 1px solid;
    border-color: #b5efe0 #2f736a #2f736a #b5efe0;
    background: #56cfb0;
}

.selected {
    height: 12px;
    margin-top: 3px;
    padding-left: 1px;
    border: 1px solid;
    border-color: #ffe6ac #7c5c22 #7c5c22 #ffe6ac;
    background: #ffc24f;
    line-height: 10px;
}

.canvas {
    flex: 1;
    min-width: 0;
    background: #000;
}

.canvas svg {
    width: 100%;
    height: 100%;
}

/* Right column: tools, overview and coordinates */
.right {
    display: flex;
    flex-direction: column;
    width: 95px;
    background: #000;
    border-left: 1px solid #2f736a;
}

.tools {
    display: grid;
    grid-template-columns: repeat(4, 1fr);
    grid-auto-rows: 1fr;
    gap: 1px;
    height: 96px;
    padding-top: 1px;
    background: #16302c;
}

.tools.edit {
    height: 142px;
    border-top: 1px solid #9bdbdb;
    background: #5e5a58;
}

.tools button {
    min-width: 0;
    min-height: 0;
    overflow: hidden;
    border: 2px solid;
    border-color: #cbf2ee #4f8d8a #4f8d8a #cbf2ee;
    outline: 1px solid #3b5c5a;
    outline-offset: -3px;
    background: #9bdbdb;
}

.tools svg {
    width: 100%;
    height: 100%;
}

.tools text {
    font: bold 9px "Liberation Sans", sans-serif;
}

.tools button.hot {
    border-color: #b1302c;
}

.tools.edit button {
    border-color: #fff #7e7c80 #7e7c80 #fff;
    outline-color: #77767c;
    background: #d4d2d6;
}

.tools.edit .white {
    background: #fff;
}

.tools.edit .gold {
    border-color: #ffe3a0 #9a6c1e #9a6c1e #ffe3a0;
    background: #ffc24f;
}

.overview {
    flex: 1;
    min-height: 0;
    border-top: 1px solid #2f736a;
}

.overview svg {
    width: 100%;
    height: 100%;
}

.coords {
    height: 25px;
    padding: 3px 0 0 1px;
    border-top: 1px solid #b5efe0;
    background: #56cfb0;
    font-size: 9px;
    line-height: 9px;
    font-weight: 400;
    white-space: nowrap;
}

/* Command line and status */
.command {
    display: flex;
    gap: 1px;
    height: 21px;
    padding: 1px 0 1px 1px;
    background: #14241c;
}

.cmd-btn {
    width: 18px;
    padding: 2px;
    border: 1px solid;
    border-color: #fff #8a8a6c #8a8a6c #fff;
    background: #ffffcc;
}

.cmd-btn.teal {
    background: #6cc0a4;
}

.cmd-btn svg {
    width: 12px;
    height: 13px;
}

.xy {
    width: 27px;
    margin-left: -1px;
    background: #ffffcc;
    line-height: 17px;
    text-align: center;
}

.xy-input {
    width: 101px;
    margin: 0 0 0 -1px;
    padding: 0 2px;
    border: 2px solid #ffffcc;
    outline: 1px solid #8a8a6c;
    outline-offset: -2px;
    background: #ffffcc;
    font: 9px "Liberation Serif", serif;
}

.xy-input::placeholder {
    color: #333;
}

.hint {
    flex: 1;
    padding-left: 1px;
    background: #ffffcc;
    line-height: 17px;
}

.unit {
    display: flex;
    align-items: center;
    width: 45px;
    padding: 2px 4px;
    border: 2px solid #48b498;
    background: #56cfb0;
    box-shadow: inset 1px 1px 0 #b5efe0, inset -1px -1px 0 #2f736a;
}

.unit select {
    appearance: none;
    flex: 1;
    min-width: 0;
    padding: 0;
    border: 0;
    background: none;
    font: bold 9px/12px "Liberation Serif", serif;
    color: #000;
}

.unit i {
    width: 7px;
    height: 4px;
    border: 1px solid;
    border-color: #b5efe0 #2f736a #2f736a #b5efe0;
}

.status {
    height: 16px;
    border: 1px solid #16302c;
    background: #b3ffff;
    box-shadow: inset -1px -2px 0 #7fc4c4;
    line-height: 13px;
    text-align: center;
}

/* Viewer toolbar */
.viewer-tools {
    display: flex;
    justify-content: center;
    padding: 16px 0 10px 2px;
}

.pill {
    display: grid;
    grid-template-columns: 128px 146px 128px;
    height: 32px;
    border: 1px solid #96938e;
    border-radius: 16px;
    background: #d6d5d0;
}

.side,
.center {
    display: flex;
    align-items: center;
    justify-content: center;
}

.start {
    gap: 28px;
    padding: 0 0 3px 8px;
}

.end {
    gap: 17px;
    padding: 0 0 3px 4px;
}

.end svg {
    width: 16px;
    height: 18px;
}

.zoom-btn svg {
    width: 30px;
    height: 20px;
}

.fit-btn svg {
    width: 19px;
    height: 19px;
}

.divider {
    width: 1px;
    height: 18px;
    margin-right: -3px;
    background: #98958f;
}

.step {
    display: flex;
    flex: 1;
    align-items: center;
    height: 26px;
    border: 1px solid #5d5f63;
    background: linear-gradient(#dcdde0, #b9bbbe 45%, #96989b 50%, #d8dadc);
    box-shadow: inset 0 0 0 1px #e2e3e5;
}

.step svg {
    width: 16px;
    height: 12px;
}

.prev {
    padding: 0 0 2px 16px;
    border-radius: 6px 0 0 6px;
}

.next {
    justify-content: flex-end;
    padding: 0 16px 2px 0;
    border-radius: 0 6px 6px 0;
}

.play {
    display: flex;
    align-items: center;
    justify-content: center;
    z-index: 1;
    width: 46px;
    height: 46px;
    margin: -7px -1px;
    border: 3px solid #cfd0d6;
    border-radius: 50%;
    outline: 1px solid #8d8e92;
    outline-offset: -1px;
    background: radial-gradient(circle at 50% 100%, #35e2ff, #1a7fe8 35%, #0d2fa8 55%, #1b43b4 60%, #8eb1ec);
}

.play svg {
    width: 22px;
    height: 18px;
}

/* Marks drawn over the screen */
.highlight {
    position: absolute;
    top: 69px;
    left: 284px;
    right: 219px;
    height: 45px;
    border: 4px solid #84ec1e;
    box-shadow: 2px 3px 4px rgba(0, 0, 0, 0.5), inset 2px 3px 4px rgba(0, 0, 0, 0.45);
}

.arrow {
    position: absolute;
    top: 116px;
    left: 336px;
    width: 310px;
    height: 440px;
    filter: drop-shadow(2px 3px 2px rgba(0, 0, 0, 0.6));
}

/* System notice in the corner */
.notice {
    position: absolute;
    right: -112px;
    bottom: -60px;
    width: 240px;
    height: 158px;
    padding: 1px;
    border: 1px solid #a8b4cc;
    background: #e6ebf3;
}

.notice header {
    display: flex;
    align-items: center;
    gap: 4px;
    height: 22px;
    padding-left: 6px;
    background: linear-gradient(#b3c5d8, #e9eff6);
    font-size: 10px;
    font-weight: 700;
}

.notice header svg {
    width: 20px;
    height: 16px;
}

.notice-body {
    height: 134px;
    margin-top: 1px;
    padding: 20px 0 0 20px;
    border: 1px solid #a9b6da;
    background: linear-gradient(#fff, #c3ddf0 80px);
    font-size: 19px;
    font-weight: 700;
    line-height: 22px;
    color: #8a6748;
    white-space: nowrap;
}

.notice-body p {
    margin: 0 0 11px;
}

.notice-body .more {
    padding-left: 65px;
}
</style>
